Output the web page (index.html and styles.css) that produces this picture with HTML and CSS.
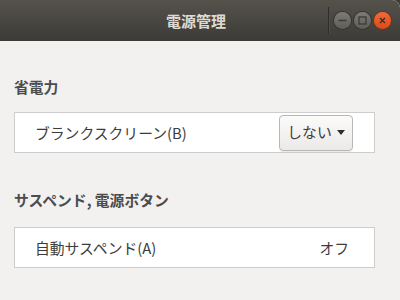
FILE: index.html
```html
<!DOCTYPE html>
<html lang="ja">

<head>
  <meta charset="UTF-8" />
  <title>電源管理</title>
  <link rel="stylesheet" href="styles.css">
</head>

<body>
  <div class="window">
    <header class="titlebar">
      <div class="title">電源管理</div>
      <div class="controls">
        <span class="sep"></span>
        <button class="wbtn">
          <svg width="17" height="17" viewBox="0 0 17 17"><path d="M4.5 8.5h8" stroke="#3c3b37" stroke-width="1.5" /></svg>
        </button>
        <button class="wbtn">
          <svg width="17" height="17" viewBox="0 0 17 17"><rect x="5" y="5" width="7" height="7" fill="none" stroke="#3c3b37" stroke-width="1.3" /></svg>
        </button>
        <button class="wbtn close">
          <svg width="17" height="17" viewBox="0 0 17 17"><path d="M6 6l5 5M11 6l-5 5" stroke="#3a2a24" stroke-width="1.3" /></svg>
        </button>
      </div>
    </header>

    <main class="content">
      <h2 class="section-title">省電力</h2>
      <div class="panel">
        <div class="row">
          <span class="label">ブランクスクリーン(B)</span>
          <button class="combo">しない <span class="arrow"></span></button>
        </div>
      </div>

      <h2 class="section-title second">サスペンド, 電源ボタン</h2>
      <div class="panel">
        <div class="row">
          <span class="label">自動サスペンド(A)</span>
          <span class="value">オフ</span>
        </div>
      </div>
    </main>
  </div>
</body>

</html>
```

FILE: styles.css
```css
* {
  box-sizing: border-box;
}

body {
  margin: 0;
  width: 400px;
  height: 300px;
  overflow: hidden;
  background: #3c3b37;
  font-family: "Noto Sans CJK JP", "Noto Sans", sans-serif;
}

.window {
  width: 400px;
  height: 300px;
  background: #f2f1f0;
  border-radius: 0 8px 0 0;
  overflow: hidden;
}

.titlebar {
  height: 41px;
  background: linear-gradient(#55524c, #3c3b37);
  display: flex;
  align-items: center;
}

.title {
  flex: 1;
  text-align: center;
  color: #dfdbd2;
  font-weight: bold;
  font-size: 15px;
  padding-left: 64px;
}

.controls {
  display: flex;
  align-items: center;
  gap: 3px;
  padding-right: 9px;
}

.sep {
  width: 1px;
  height: 27px;
  background: #2f2e2b;
  box-shadow: 1px 0 0 #4e4c47;
  margin-right: 2px;
}

.wbtn {
  width: 17px;
  height: 17px;
  padding: 0;
  border: none;
  border-radius: 50%;
  background: linear-gradient(#7d7b76, #5f5d58);
  box-shadow: 0 0 0 1px #35342f;
  display: flex;
  align-items: center;
  justify-content: center;
}

.wbtn.close {
  background: linear-gradient(#f26a3a, #de4a15);
  box-shadow: 0 0 0 1px #7e3014;
}

.content {
  padding: 0 25px 0 14px;
}

.section-title {
  margin: 0;
  padding-top: 36px;
  height: 71px;
  font-size: 14.8px;
  font-weight: bold;
  color: #4c4c4c;
  line-height: 20px;
}

.section-title.second {
  padding-top: 37px;
  height: 74px;
}

.panel {
  background: #ffffff;
  border: 1px solid #cdcdcd;
  height: 41px;
}

.row {
  height: 100%;
  display: flex;
  align-items: center;
  padding: 0 25px 0 20px;
  font-size: 14.8px;
  color: #3c3c3c;
}

.label {
  flex: 1;
}

.combo {
  margin-right: -4px;
  width: 74px;
  height: 36px;
  border: 1px solid #b6b6b3;
  border-radius: 4px;
  background: linear-gradient(#fbfbfa, #ebeae8);
  box-shadow: 0 1px 0 rgba(0, 0, 0, 0.08);
  font-family: inherit;
  font-size: 14.8px;
  color: #3c3c3c;
  display: flex;
  align-items: center;
  justify-content: center;
  gap: 5px;
  padding: 0 0 2px;
}

.arrow {
  width: 0;
  height: 0;
  border-left: 4px solid transparent;
  border-right: 4px solid transparent;
  border-top: 5px solid #2e2e2e;
  margin-top: 2px;
}

.value {
  color: #3c3c3c;
}
```
